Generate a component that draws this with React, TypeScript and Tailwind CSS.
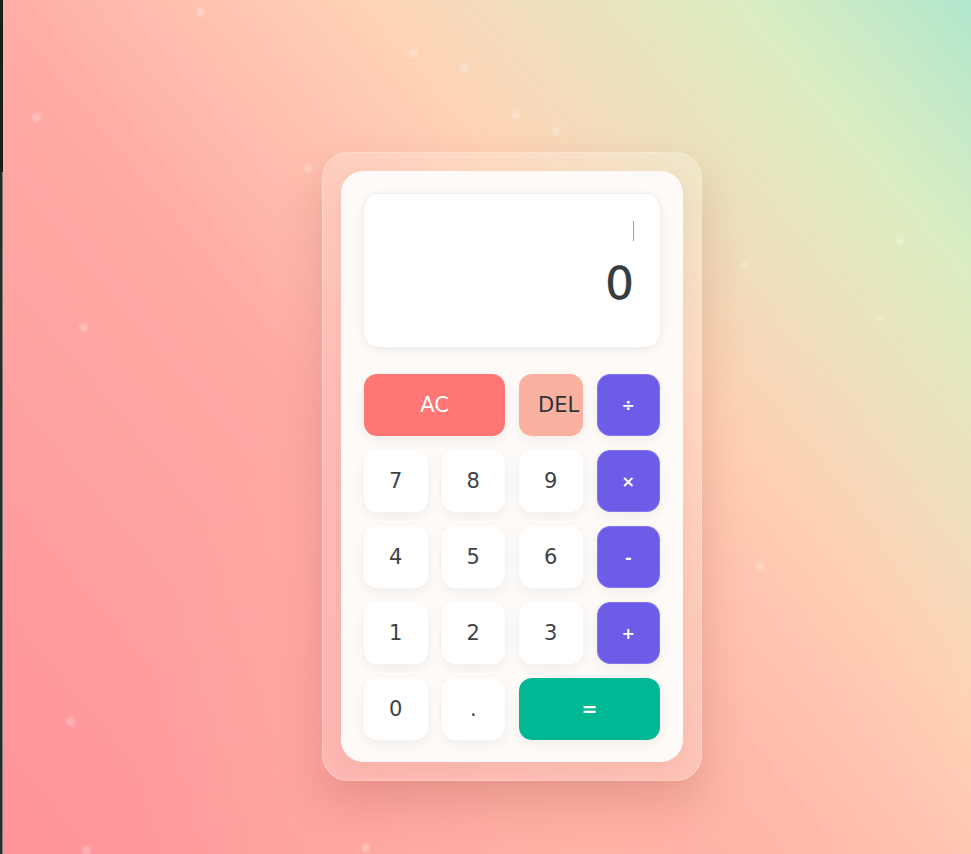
import React from "react";

const dots: { x: number; y: number; s: number }[] = [
  { x: 200, y: 12, s: 9 },
  { x: 413, y: 53, s: 9 },
  { x: 464, y: 67, s: 9 },
  { x: 36, y: 117, s: 9 },
  { x: 516, y: 114, s: 9 },
  { x: 556, y: 131, s: 9 },
  { x: 308, y: 168, s: 9 },
  { x: 83, y: 327, s: 9 },
  { x: 899, y: 240, s: 9 },
  { x: 745, y: 265, s: 8 },
  { x: 880, y: 318, s: 8 },
  { x: 760, y: 566, s: 8 },
  { x: 70, y: 721, s: 9 },
  { x: 86, y: 850, s: 9 },
  { x: 366, y: 848, s: 8 },
];

type Btn = { label: string; kind: "num" | "ac" | "del" | "op" | "eq"; span?: number };

const buttons: Btn[] = [
  { label: "AC", kind: "ac", span: 2 },
  { label: "DEL", kind: "del" },
  { label: "÷", kind: "op" },
  { label: "7", kind: "num" },
  { label: "8", kind: "num" },
  { label: "9", kind: "num" },
  { label: "×", kind: "op" },
  { label: "4", kind: "num" },
  { label: "5", kind: "num" },
  { label: "6", kind: "num" },
  { label: "-", kind: "op" },
  { label: "1", kind: "num" },
  { label: "2", kind: "num" },
  { label: "3", kind: "num" },
  { label: "+", kind: "op" },
  { label: "0", kind: "num" },
  { label: ".", kind: "num" },
  { label: "=", kind: "eq", span: 2 },
];

function classFor(b: Btn): string {
  const base =
    "h-[62px] rounded-[13px] px-[19px] whitespace-nowrap text-center leading-[62px] shadow-[0_4px_12px_rgba(0,0,0,0.06)]";
  switch (b.kind) {
    case "ac":
      return `${base} col-span-2 bg-[#ff7675] text-white text-[21px]`;
    case "del":
      return `${base} bg-[#fab1a0] text-[#2d3436] text-[21px]`;
    case "op":
      return `${base} bg-[#6c5ce7] text-white text-[16px] font-bold border border-[#8576f0]`;
    case "eq":
      return `${base} col-span-2 bg-[#00b894] text-white text-[19px] font-bold`;
    default:
      return `${base} bg-white text-[#3d4449] text-[21px]`;
  }
}

export default function App() {
  return (
    <div
      className="relative flex min-h-[854px] w-full overflow-hidden bg-[radial-gradient(ellipse_at_60%_105%,rgba(255,188,166,0.55)_0%,rgba(255,188,166,0)_55%),linear-gradient(50deg,#ff8b94_-14%,#ffaaa5_40%,#ffd3b6_64%,#dcedc1_86%,#a8e6cf_103%)]"
      style={{ fontFamily: '"DejaVu Sans", "Noto Sans", sans-serif' }}
    >
      {dots.map((d, i) => (
        <div
          key={i}
          className="absolute rounded-full bg-white/25 blur-[1px]"
          style={{ left: d.x - d.s / 2, top: d.y - d.s / 2, width: d.s, height: d.s }}
        />
      ))}

      <div className="flex w-[3px] shrink-0 flex-col">
        <div className="h-[172px] bg-[#1c1c1c]" />
        <div className="flex-1 bg-[#2a2a2a] border-r border-[#7a7a7a]" />
      </div>

      <div className="relative pl-[319px] pt-[152px]">
        <div className="w-[380px] rounded-[26px] border border-white/20 bg-white/20 p-[18px] shadow-[0_22px_45px_rgba(120,40,30,0.18)]">
          <div className="w-[342px] rounded-[22px] bg-[#fefaf7] px-[23px] pb-[22px] pt-[23px] shadow-[0_8px_24px_rgba(120,60,40,0.08)]">
            <div className="flex h-[153px] flex-col items-end rounded-[15px] bg-white pr-[26px] pt-[27px] shadow-[0_2px_10px_rgba(0,0,0,0.08)] ring-1 ring-[#f1f1f1]">
              <div className="h-[20px] w-[1px] bg-[#9aa0a6]" />
              <div className="mt-[17px] text-[45px] leading-[52px] text-[#353c40] [-webkit-text-stroke:0.6px_#353c40]">0</div>
            </div>

            <div className="mt-[27px] grid grid-cols-4 gap-x-[14px] gap-y-[14px]">
              {buttons.map((b, i) => (
                <div key={i} className={classFor(b)}>
                  {b.label}
                </div>
              ))}
            </div>
          </div>
        </div>
      </div>
    </div>
  );
}
